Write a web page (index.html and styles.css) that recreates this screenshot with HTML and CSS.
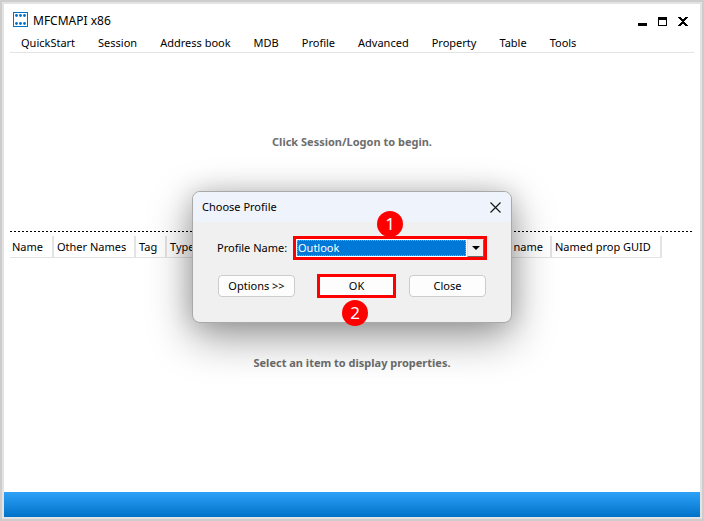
FILE: index.html
```
<!DOCTYPE html>
<html lang="en">
<head>
    <meta charset="UTF-8">
    <meta name="viewport" content="width=device-width, initial-scale=1.0">
    <title>MFCMAPI x86</title>
    <link rel="stylesheet" href="styles.css">
</head>
<body>
    <div class="window">
        <header class="titlebar">
            <svg class="app-icon" width="15" height="15" viewBox="0 0 15 15" aria-hidden="true">
                <rect x="0.5" y="0.5" width="14" height="14" fill="#fff" stroke="#0072c6"/>
                <g fill="#0072c6">
                    <circle cx="3.5" cy="3.5" r="1.4"/><circle cx="7.5" cy="3.5" r="1.4"/><circle cx="11.5" cy="3.5" r="1.4"/>
                    <circle cx="3.5" cy="11.5" r="1.4"/><circle cx="7.5" cy="11.5" r="1.4"/><circle cx="11.5" cy="11.5" r="1.4"/>
                </g>
            </svg>
            <h1 class="app-title">MFCMAPI x86</h1>
            <div class="window-controls">
                <button class="window-button" aria-label="Minimize">
                    <svg width="9" height="9" viewBox="0 0 9 9"><path d="M0 6h9v3H0z"/></svg>
                </button>
                <button class="window-button" aria-label="Maximize">
                    <svg width="9" height="9" viewBox="0 0 9 9"><path fill-rule="evenodd" d="M0 0h9v9H0zM1 3v5h7V3z"/></svg>
                </button>
                <button class="window-button" aria-label="Close window">
                    <svg width="10" height="9" viewBox="0 0 10 9"><path d="M0 0h3v1h1v1h2V1h1V0h3v1H9v1H8v1H7v1H6v1h1v1h1v1h1v1h1v1H7V8H6V7H4v1H3v1H0V8h1V7h1V6h1V5h1V4H3V3H2V2H1V1H0z"/></svg>
                </button>
            </div>
        </header>

        <nav class="menu">
            <button class="menu-item">QuickStart</button>
            <button class="menu-item">Session</button>
            <button class="menu-item">Address book</button>
            <button class="menu-item">MDB</button>
            <button class="menu-item">Profile</button>
            <button class="menu-item">Advanced</button>
            <button class="menu-item">Property</button>
            <button class="menu-item">Table</button>
            <button class="menu-item">Tools</button>
        </nav>

        <main class="panes">
            <section class="pane pane-top">
                <p class="hint">Click Session/Logon to begin.</p>
            </section>
            <section class="pane pane-bottom">
                <table class="columns">
                    <thead>
                        <tr>
                            <th class="col-name">Name</th>
                            <th class="col-other">Other Names</th>
                            <th class="col-tag">Tag</th>
                            <th class="col-type">Type</th>
                            <th class="col-prop">name</th>
                            <th class="col-guid">Named prop GUID</th>
                        </tr>
                    </thead>
                </table>
                <p class="hint">Select an item to display properties.</p>
            </section>
        </main>

        <footer class="statusbar"></footer>

        <form class="dialog" role="dialog" aria-labelledby="dialog-title">
            <div class="dialog-header">
                <h2 class="dialog-title" id="dialog-title">Choose Profile</h2>
                <button class="dialog-close" type="button" aria-label="Close dialog">
                    <svg width="11" height="11" viewBox="0 0 11 11"><path d="M0.5 0.5l10 10M10.5 0.5l-10 10" fill="none" stroke="#111" stroke-width="1.1"/></svg>
                </button>
            </div>
            <div class="dialog-body">
                <div class="field">
                    <label class="field-label" for="profile">Profile Name:</label>
                    <div class="select-box marked">
                        <select class="select" id="profile">
                            <option>Outlook</option>
                        </select>
                        <span class="arrow"></span>
                        <span class="badge badge-above">1</span>
                    </div>
                </div>
                <div class="actions">
                    <button class="button" type="button">Options &gt;&gt;</button>
                    <div class="ok-box">
                        <button class="button marked" type="button">OK</button>
                        <span class="badge badge-below">2</span>
                    </div>
                    <button class="button" type="button">Close</button>
                </div>
            </div>
        </form>
    </div>
</body>
</html>
```

FILE: styles.css
```
* {
    margin: 0;
    padding: 0;
    box-sizing: border-box;
}

body {
    font-family: "Noto Sans", "Open Sans", sans-serif;
    font-size: 11px;
    line-height: 16px;
    color: #000;
    background: #e3e3e3;
}

button, select {
    font: inherit;
    color: inherit;
    border: none;
    background: none;
}

.window {
    position: relative;
    display: flex;
    flex-direction: column;
    height: 100vh;
    min-height: 400px;
    padding: 2px;
    border: 2px solid #cdcdcd;
    overflow: hidden;
    background: linear-gradient(#fff, #fff) content-box, #e3e3e3;
}

/* Title bar and menu */
.titlebar {
    display: flex;
    align-items: center;
    height: 30px;
    padding: 4px 12px 0 9px;
}

.app-icon {
    margin-bottom: 4px;
}

.app-title {
    margin-left: 5px;
    font-size: 12px;
    font-weight: normal;
}

.window-controls {
    display: flex;
    gap: 11px;
    margin-left: auto;
}

.window-button {
    display: flex;
}

.menu {
    display: flex;
    gap: 23px;
    height: 19px;
    margin: 0 6px;
    padding: 0 11px;
    border-bottom: 1px solid #e3e3e3;
}

.menu-item {
    white-space: nowrap;
}

/* Panes */
.panes {
    flex: 1;
    display: flex;
    flex-direction: column;
    margin: 0 6px;
}

.pane-top {
    flex: 15;
    display: flex;
    align-items: center;
    justify-content: center;
}

.pane-bottom {
    flex: 22;
    display: flex;
    flex-direction: column;
    background: repeating-linear-gradient(90deg, #000 0 2px, #fff 2px 4px) top / 100% 1px no-repeat;
}

.hint {
    font-weight: bold;
    color: #6d6d6d;
    text-align: center;
}

.pane-bottom .hint {
    margin-top: 97px;
}

.columns {
    width: calc(100% - 32px);
    margin-top: 5px;
    table-layout: fixed;
    border-collapse: collapse;
    border-bottom: 1px solid #e3e3e3;
}

.columns th {
    height: 22px;
    padding-left: 3px;
    border-right: 2px solid #e3e3e3;
    font-weight: normal;
    text-align: left;
    white-space: nowrap;
}

.columns .col-name {
    width: 43px;
    padding-left: 2px;
}

.columns .col-other {
    width: 82px;
}

.columns .col-tag {
    width: 31px;
}

.columns .col-type {
    border-right: none;
}

.columns .col-prop {
    width: 60px;
    padding-right: 7px;
    text-align: right;
}

.columns .col-guid {
    width: 110px;
}

.statusbar {
    height: 25px;
    background: linear-gradient(#2ea2f8, #0072c9);
}

/* Dialog */
.dialog {
    position: absolute;
    top: 189px;
    left: 50%;
    width: 320px;
    transform: translateX(-50%);
    border: 1px solid #a9a9a9;
    border-radius: 8px;
    background: #f0f0f0;
    box-shadow: 0 14px 44px rgba(0, 0, 0, 0.4), 0 0 24px rgba(0, 0, 0, 0.15);
}

.dialog-header {
    display: flex;
    align-items: center;
    justify-content: space-between;
    height: 30px;
    padding: 0 10px 0 9px;
    border-radius: 7px 7px 0 0;
    background: #eff3fb;
}

.dialog-title {
    font-size: 11px;
    font-weight: normal;
}

.dialog-close {
    display: flex;
}

.dialog-body {
    padding: 14px 24px 24px;
}

.field {
    display: flex;
    align-items: center;
    justify-content: space-between;
}

.select-box {
    position: relative;
    display: flex;
    width: 194px;
    height: 24px;
    background: #fff;
}

.marked {
    border: 3px solid #f00;
}

.select {
    flex: 1;
    appearance: none;
    margin: 1px;
    border: 1px dotted #ff8728;
    color: #fff;
    background: #0078d7;
    line-height: 14px;
}

.arrow {
    display: flex;
    align-items: center;
    justify-content: center;
    width: 17px;
    border: 1px solid #e3e3e3;
    border-right-color: #696969;
    border-bottom-color: #696969;
    background: #f0f0f0;
    pointer-events: none;
}

.arrow::before {
    content: "";
    border: 4px solid transparent;
    border-top-color: #000;
    border-bottom: none;
}

.actions {
    display: flex;
    align-items: center;
    gap: 13px;
    margin-top: 14px;
    padding-left: 1px;
}

.button {
    width: 77px;
    height: 22px;
    border: 1px solid #ccc;
    border-radius: 4px;
    background: #fdfdfd;
}

.ok-box {
    position: relative;
    display: flex;
    margin-left: 9px;
}

.button.marked {
    width: 79px;
    height: 24px;
    border: 3px solid #f00;
    border-radius: 0;
}

.badge {
    position: absolute;
    width: 26px;
    height: 26px;
    border-radius: 50%;
    color: #fff;
    background: #f00;
    font-size: 17px;
    line-height: 26px;
    text-align: center;
}

.badge-above {
    bottom: 20px;
    left: 81px;
}

.badge-below {
    top: 26px;
    left: 25px;
}
```
